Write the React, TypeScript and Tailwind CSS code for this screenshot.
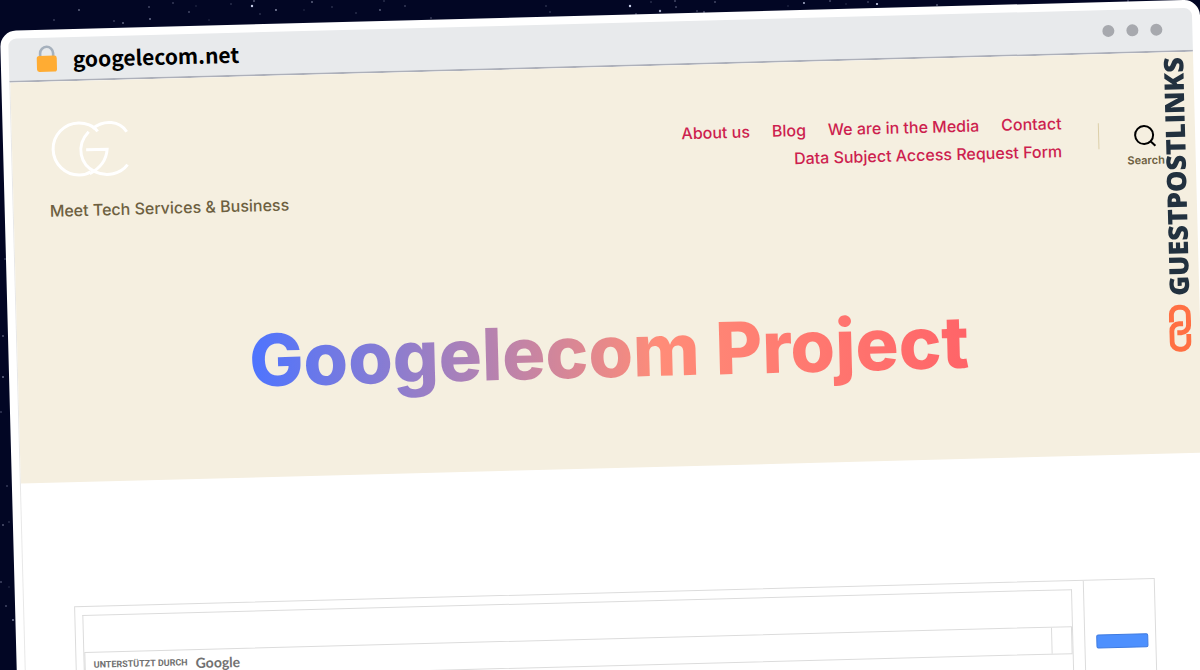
import { useState } from 'react'

// [x, y, radius, opacity]
const STARS = [
  [79, 10, 1, 0.7], [54, 20, 1, 0.4], [149, 7, 1, 0.5], [173, 3, 1, 0.4], [114, 21, 1, 0.4], [123, 23, 1, 0.7],
  [150, 19, 1, 0.8], [189, 12, 1, 0.5], [252, 6, 1.5, 0.9], [254, 1, 1, 0.6], [276, 10, 1.2, 0.6], [209, 20, 1, 0.2],
  [260, 14, 1, 0.3], [196, 6, 1, 0.2], [231, 4, 1, 0.3], [312, 2, 1, 0.7], [304, 10, 1, 0.2], [332, 7, 1, 0.3],
  [356, 13, 1, 0.3], [384, 1, 1, 0.3], [380, 10, 1.2, 0.4], [405, 6, 1, 0.4], [431, 18, 1, 0.4], [546, 6, 1, 0.3],
  [550, 12, 1, 0.3], [630, 6, 1.5, 0.9], [636, 14, 1, 0.5], [660, 11, 1.5, 0.7], [676, 7, 1, 0.5], [675, 1, 1, 0.5],
  [651, 2, 1, 0.3], [715, 2, 1, 0.5], [697, 11, 1, 0.4], [704, 12, 1, 0.6], [788, 6, 1, 0.2], [804, 3, 1.2, 0.8],
  [830, 1, 1, 0.5], [846, 4, 1, 0.2], [868, 2, 1, 0.4], [877, 4, 1.4, 0.9], [937, 5, 1, 0.6], [1128, 1, 1, 0.5],
  [5, 259, 1, 0.4], [3, 336, 1, 0.6], [3, 377, 1, 0.8], [1, 412, 1, 0.4], [7, 486, 1, 0.4], [3, 525, 1, 0.6],
  [9, 522, 1, 0.3], [1, 582, 1, 0.5], [9, 587, 1, 0.2], [6, 606, 1, 0.5], [13, 620, 1, 0.9],
]

const NAV = ['About us', 'Blog', 'We are in the Media', 'Contact', 'Data Subject Access Request Form']

function Stars() {
  return (
    <svg className="absolute inset-0 h-full w-full" aria-hidden="true">
      {STARS.map(([x, y, r, o]) => (
        <circle key={`${x}-${y}`} cx={x} cy={y} r={r * 0.8} fill="#dfe6ff" opacity={o} />
      ))}
    </svg>
  )
}

function LockIcon() {
  return (
    <svg width="22" height="28" viewBox="0 0 22 28" fill="none" aria-hidden="true">
      <path d="M4.500 12V8.500a6.500 6.500 0 0 1 13 0v3.500" stroke="#a6b1bd" strokeWidth="2.600" />
      <rect x="1" y="11" width="20" height="16" rx="2.5" fill="#ffac33" />
    </svg>
  )
}

function Logo() {
  return (
    <svg width="82" height="56" viewBox="-4 0 82 56" fill="none" stroke="#fff" strokeWidth="3" aria-label="GC">
      <path d="M46 11C42 5 34 2 27 2A26 26 0 0 0 27 54C31 54 35 53 38 51" />
      <path d="M41 8C53 -1 68 1 75 12" />
      <path d="M37 11C23 25 28 44 42 51C54 57 68 54 75 45" />
      <path d="M34 29H55C54 40 47 48 37 53" />
    </svg>
  )
}

function LinkIcon() {
  return (
    <svg width="22" height="48" viewBox="0 0 22 48" fill="none" stroke="#ff7043" strokeWidth="5" aria-hidden="true">
      <path d="M2.500 18V10.500A7.500 7.500 0 0 1 10 3H12A7.500 7.500 0 0 1 19.500 10.500V21A7.500 7.500 0 0 1 12 28.500H8" />
      <path d="M19.500 30V37.500A7.500 7.500 0 0 1 12 45H10A7.500 7.500 0 0 1 2.500 37.500V27A7.500 7.500 0 0 1 10 19.500H14" />
    </svg>
  )
}

function AddressBar() {
  return (
    <div className="flex h-11 items-center rounded-t-lg border-b-2 border-[#adb0ba] bg-[#e8eaec] pr-[30px] pl-[27px]">
      <LockIcon />
      <span className="ml-[15px] font-['Noto_Sans_CJK_SC',sans-serif] text-[21px] leading-8 font-bold text-black">googelecom.net</span>
      <div className="ml-auto flex gap-3">
        <span className="h-3 w-3 rounded-full bg-[#a7a9ae]" />
        <span className="h-3 w-3 rounded-full bg-[#a7a9ae]" />
        <span className="h-3 w-3 rounded-full bg-[#a7a9ae]" />
      </div>
    </div>
  )
}

function Hero() {
  return (
    <header className="h-[401px] bg-[#f5efe0] pt-10 pl-9">
      <div className="flex items-start">
        <div>
          <Logo />
          <p className="mt-5 text-base leading-[26px] font-medium text-[#6d6040]">Meet Tech Services &amp; Business</p>
        </div>
        <nav className="mt-[14px] ml-auto flex w-[400px] flex-wrap justify-end gap-x-[22px] text-base leading-7 font-medium">
          {NAV.map((item) => (
            <a key={item} href="#" className="text-[#cd1f4f]">{item}</a>
          ))}
        </nav>
        <div className="mt-[29px] ml-9 h-[26px] w-px bg-[#dccfa8]" />
        <button type="button" className="mt-[31px] mr-[31px] ml-7 flex flex-col items-center text-[#6d6040]">
          <svg width="24" height="24" viewBox="0 0 24 24" fill="none" stroke="#000" strokeWidth="2" aria-hidden="true">
            <circle cx="11" cy="11" r="9" />
            <path d="M17.500 17.500L22 22" />
          </svg>
          <span className="mt-1 text-[11px] leading-4 font-semibold">Search</span>
        </button>
      </div>
      <h1 className="mt-[94px] mr-9 text-center text-7xl leading-[96px] font-extrabold">
        <span className="inline-block bg-[linear-gradient(to_right,#4d74ff,#ff8c78_57%,#ff6468)] bg-clip-text text-transparent">
          Googelecom Project
        </span>
      </h1>
    </header>
  )
}

function SearchForm() {
  const [query, setQuery] = useState('')

  return (
    <form className="mt-[124px] mr-[52px] ml-[50px] flex h-40 border border-[#dcdcdc]" onSubmit={(e) => e.preventDefault()}>
      <div className="flex-1 border-r border-[#dcdcdc] pt-2 pr-[11px] pl-[7px]">
        <div className="h-full border border-b-0 border-[#dcdcdc] pt-9">
          <div className="flex h-7 border border-[#dcdcdc]">
            <label htmlFor="q" className="flex items-center gap-2 pl-2 text-[#717171]">
              <span className="font-['Roboto',sans-serif] text-[9px] font-bold">UNTERSTÜTZT DURCH</span>
              <span className="font-['Lato',sans-serif] text-sm font-bold">Google</span>
            </label>
            <input id="q" value={query} onChange={(e) => setQuery(e.target.value)} className="min-w-0 flex-1 bg-transparent px-2 text-sm outline-none" />
            <span className="w-5 border-l border-[#dcdcdc]" />
          </div>
        </div>
      </div>
      <div className="w-[70px] pt-[54px] pl-[11px]">
        <button type="submit" aria-label="Suche" className="block h-[14px] w-[52px] rounded-xs border border-[#3f7be0] bg-[#4d90fe]" />
      </div>
    </form>
  )
}

export default function App() {
  return (
    <div className="relative h-screen overflow-hidden bg-[#020624] pt-[31px] font-['Inter',sans-serif]">
      <Stars />
      <div className="relative origin-top-left rotate-[-1.5deg] rounded-2xl bg-white p-2">
        <AddressBar />
        <div className="border-l border-[#e8e8e8]">
          <Hero />
          <SearchForm />
        </div>
        <div className="absolute top-[57px] right-[16px] flex w-6 flex-col items-center gap-2">
          <span className="rotate-180 font-['Open_Sans',sans-serif] text-[27px] leading-6 font-extrabold text-[#22313f] [writing-mode:vertical-rl]">GUESTPOSTLINKS</span>
          <LinkIcon />
        </div>
      </div>
    </div>
  )
}
